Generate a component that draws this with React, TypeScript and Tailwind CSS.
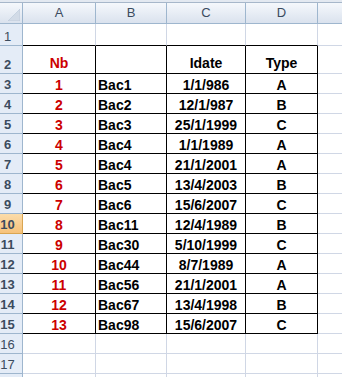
import React from 'react';

const data: [string, string, string, string][] = [
  ['1', 'Bac1', '1/1/986', 'A'],
  ['2', 'Bac2', '12/1/987', 'B'],
  ['3', 'Bac3', '25/1/1999', 'C'],
  ['4', 'Bac4', '1/1/1989', 'A'],
  ['5', 'Bac4', '21/1/2001', 'A'],
  ['6', 'Bac5', '13/4/2003', 'B'],
  ['7', 'Bac6', '15/6/2007', 'C'],
  ['8', 'Bac11', '12/4/1989', 'B'],
  ['9', 'Bac30', '5/10/1999', 'C'],
  ['10', 'Bac44', '8/7/1989', 'A'],
  ['11', 'Bac56', '21/1/2001', 'A'],
  ['12', 'Bac67', '13/4/1998', 'B'],
  ['13', 'Bac98', '15/6/2007', 'C'],
];

function RowHead({ n, selected = false }: { n?: number; selected?: boolean }) {
  return (
    <div
      className={
        selected
          ? 'flex w-[23px] shrink-0 items-end justify-center border-r border-b border-[#d9a551] bg-gradient-to-b from-[#fbdcaa] to-[#f6c27a] pr-[7px] text-[13px] leading-[16px] text-[#3b4b5e]'
          : 'flex w-[23px] shrink-0 items-end justify-center border-r border-b border-[#9eb6ce] bg-[#e4ecf7] pr-[7px] text-[13px] leading-[16px] text-[#3b4b5e]'
      }
    >
      {n}
    </div>
  );
}

function Filler() {
  return <div className="flex-1 border-b border-[#d0d7e5]" />;
}

function EmptyRow({ n, h }: { n?: number; h: string }) {
  return (
    <div className={`flex ${h}`}>
      <RowHead n={n} />
      <div className="w-[73px] border-r border-b border-[#d0d7e5]" />
      <div className="w-[71px] border-r border-b border-[#d0d7e5]" />
      <div className="w-[79px] border-r border-b border-[#d0d7e5]" />
      <div className="w-[72px] border-r border-b border-[#d0d7e5]" />
      <Filler />
    </div>
  );
}

export default function App() {
  return (
    <div className="flex h-[377px] w-[342px] flex-col overflow-hidden bg-white font-['Liberation_Sans',Arial,sans-serif]">
      <div className="h-[3px] shrink-0 border-b border-[#a7b7ca] bg-[#e3e9f1]" />

      {/* column headers */}
      <div className="flex h-[21px] shrink-0 bg-gradient-to-b from-[#f5f8fc] to-[#d9e1ed] text-[13px] leading-[20px] text-[#3b4b5e]">
        <div className="relative w-[23px] border-r border-b border-[#9eb6ce]">
          <svg className="absolute right-[2px] bottom-[2px]" width="12" height="12" viewBox="0 0 12 12">
            <polygon points="12,0 12,12 0,12" fill="#d2dbe7" stroke="#b9c7d8" strokeWidth="0.6" />
          </svg>
        </div>
        <div className="w-[73px] border-r border-b border-[#9eb6ce] text-center">A</div>
        <div className="w-[71px] border-r border-b border-[#9eb6ce] text-center">B</div>
        <div className="w-[79px] border-r border-b border-[#9eb6ce] text-center">C</div>
        <div className="w-[72px] border-r border-b border-[#9eb6ce] text-center">D</div>
        <div className="flex-1 border-b border-[#9eb6ce]" />
      </div>

      {/* row 1 */}
      <div className="flex h-[22px] shrink-0">
        <RowHead n={1} />
        <div className="w-[73px] border-r border-b border-r-[#d0d7e5] border-b-black" />
        <div className="w-[71px] border-r border-b border-r-[#d0d7e5] border-b-black" />
        <div className="w-[79px] border-r border-b border-r-[#d0d7e5] border-b-black" />
        <div className="w-[72px] border-r border-b border-r-[#d0d7e5] border-b-black" />
        <Filler />
      </div>

      {/* row 2 - table header */}
      <div className="flex h-[28px] shrink-0 text-[14px] leading-[16px] font-bold">
        <RowHead n={2} />
        <div className="flex w-[73px] items-end justify-center border-r border-b border-black pb-[2px] text-[#cc0000]">Nb</div>
        <div className="w-[71px] border-r border-b border-black" />
        <div className="flex w-[79px] items-end justify-center border-r border-b border-black pb-[2px]">Idate</div>
        <div className="flex w-[72px] items-end justify-center border-r border-b border-black pb-[2px]">Type</div>
        <Filler />
      </div>

      {data.map(([nb, name, date, type], i) => (
        <div key={i} className="flex h-[20px] shrink-0 text-[14px] leading-[16px] font-bold">
          <RowHead n={i + 3} selected={i + 3 === 10} />
          <div className="flex w-[73px] items-end justify-center border-r border-b border-black text-[#cc0000]">{nb}</div>
          <div className="flex w-[71px] items-end border-r border-b border-black pl-[2px]">{name}</div>
          <div className="flex w-[79px] items-end justify-center border-r border-b border-black">{date}</div>
          <div className="flex w-[72px] items-end justify-center border-r border-b border-black">{type}</div>
          <Filler />
        </div>
      ))}

      <EmptyRow n={16} h="h-[20px] shrink-0" />
      <EmptyRow n={17} h="h-[20px] shrink-0" />
      <EmptyRow h="h-[20px] shrink-0" />
    </div>
  );
}
